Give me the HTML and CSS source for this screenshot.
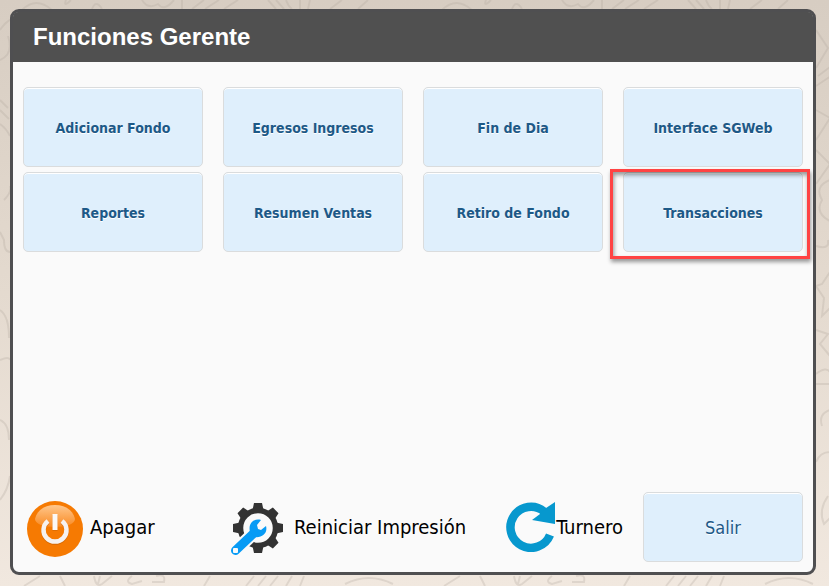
FILE: index.html
```html
<!DOCTYPE html>
<html lang="es">
<head>
<meta charset="utf-8">
<meta name="viewport" content="width=device-width, initial-scale=1">
<title>Funciones Gerente</title>
<link rel="stylesheet" href="styles.css">
</head>
<body>
<svg class="doodles" aria-hidden="true">
  <defs>
    <pattern id="doodle" width="420" height="600" patternUnits="userSpaceOnUse">
      <path d="M22 10q14-14 30 0M66 0q-3 8 5 0M92 9q4-10 10 0M142 0q6 10 16 4q6 8 16-4M182 0v9M192 9l12-9M205 9l14-9M224 9l14-9M268 0l8 9M276 0l8 9M286 0q2 6 6 9M300 0v9M310 0l-2 9M330 9l12-9M358 9l10-9"/>
      <path d="M0 30q12-18 26-8M0 60q14-6 8-24M0 100l8 8M0 110l9 9M0 124q6 4 10 12M4 200q8-8 6-14M0 232l4 8q0 12 6 12M0 310q9 6 9 28M0 360q9-4 10 0M0 420q9 4 9 20M0 500q8-10 10-24"/>
      <path d="M396 30l12 18-12 20M398 76l16-12M396 86l18-12M396 110l14 8-14 22M396 150l14 14-14 20M410 180q-16 6-8 20q-8 14 10 22M396 246q14 4 12-6M410 272l-8 12-6 2 8 12-2 18 8-8M396 330l12 4-8 10 10 12M396 374q10-8 14-2M396 384h14M410 410q-12 4-8 16M396 462q4-10 14-10M408 496q-10 14-4 28l8-8"/>
      <path d="M24 586l16-10M60 576l5 10M94 576q2 12 8 8l10-8M100 576l-2 8M132 576q-8 6 0 8l10-3M156 576q10-3 8 6h-12M210 576l-6 10M246 586l8-10M258 586l8-10M270 586l8-10M286 586l6-10M300 586l4-10M345 584q24-12 48 0"/>
    </pattern>
  </defs>
  <rect width="100%" height="100%" fill="url(#doodle)" stroke="none"/>
</svg>
<main class="panel">
  <header class="panel-header"><h1>Funciones Gerente</h1></header>
  <div class="grid">
    <button class="tile" type="button">Adicionar Fondo</button>
    <button class="tile" type="button">Egresos Ingresos</button>
    <button class="tile" type="button">Fin de Dia</button>
    <button class="tile" type="button">Interface SGWeb</button>
    <button class="tile" type="button">Reportes</button>
    <button class="tile" type="button">Resumen Ventas</button>
    <button class="tile" type="button">Retiro de Fondo</button>
    <div class="marked"><button class="tile" type="button">Transacciones</button></div>
  </div>
  <footer class="actions">
    <button class="action" type="button">
      <svg class="icon-power" viewBox="0 0 56 56" aria-hidden="true">
        <defs>
          <linearGradient id="gloss" x1="0" y1="0" x2="0" y2="1"><stop offset="0" stop-color="#ffc78c"/><stop offset="1" stop-color="#f98a22"/></linearGradient>
        </defs>
        <circle cx="28" cy="28" r="28" fill="#f67a02"/>
        <path d="M8 18C10 9 18 4 28 4s18 5 20 14c0 5-9 8-20 8S8 23 8 18z" fill="url(#gloss)"/>
        <path d="M21 21A11.500 11.500 0 1 0 35 21" fill="none" stroke="#b85a06" stroke-opacity=".5" stroke-width="4.500"/>
        <path d="M21 20A11.500 11.500 0 1 0 35 20" fill="none" stroke="#f6f2f0" stroke-width="4.500"/>
        <rect x="25.500" y="14" width="5" height="16" fill="#b85a06" fill-opacity=".4"/>
        <rect x="25.500" y="13" width="5" height="16" fill="#fbf8f6"/>
      </svg>
      <span>Apagar</span>
    </button>
    <button class="action action-print" type="button">
      <svg class="icon-gear" viewBox="0 0 54 54" aria-hidden="true">
        <g transform="translate(28 26)" fill="#333">
          <circle r="17.500" fill="none" stroke="#333" stroke-width="5.500"/>
          <g id="teeth"><path d="M-5.500-18l1.500-7h8l1.500 7zM-5.500 18l1.500 7h8l1.500-7z"/><path d="M-18-5.500l-7 1.500v8l7 1.500zM18-5.500l7 1.500v8l-7 1.500z"/></g>
          <use href="#teeth" transform="rotate(45)"/>
        </g>
        <path d="M25 30L6 48" stroke="#fafafa" stroke-width="13" stroke-linecap="round"/>
        <path d="M24 31L5.500 48.500" stroke="#079bf5" stroke-width="9" stroke-linecap="round"/>
        <path d="M31 18C23 16 18 22 20 30L25 35C32 36 38 31 36 24L31 28L28 27L27 23z" fill="#079bf5"/>
        <rect x="3" y="46" width="5" height="5" rx="1" fill="#fafafa"/>
      </svg>
      <span>Reiniciar Impresión</span>
    </button>
    <button class="action action-turn" type="button">
      <svg class="icon-reload" viewBox="0 0 50 50" aria-hidden="true">
        <path d="M44 33A20.500 20.500 0 1 1 38 9.500" fill="none" stroke="#0798ce" stroke-width="8.500"/>
        <path d="M49 0v22l-23-4 8-6 6-6z" fill="#0798ce"/>
      </svg>
      <span>Turnero</span>
    </button>
    <button class="tile exit" type="button">Salir</button>
  </footer>
</main>
</body>
</html>
```
FILE: styles.css
```css
* { box-sizing: border-box; }

body {
  min-height: 100vh;
  margin: 0;
  padding: 9px 13px 11px 10px;
  display: flex;
  background: linear-gradient(#d7cdc2, #e4dacf 50%, #f1e8df);
  font-family: Tahoma, "DejaVu Sans Condensed", "Noto Sans", sans-serif;
}

.doodles {
  position: absolute;
  inset: 0;
  width: 100%;
  height: 100%;
  z-index: -1;
  fill: none;
  stroke: #b5aba0;
  stroke-opacity: 0.3;
  stroke-width: 2;
}

.panel {
  flex: 1;
  display: flex;
  flex-direction: column;
  border: 3px solid #4f4f51;
  border-radius: 9px;
  background: #fafafa;
}

.panel-header {
  padding: 10px 20px 11px;
  background: #505050;
  border-radius: 5px 5px 0 0;
}

h1 {
  margin: 0;
  color: #fff;
  font: bold 24px/29px "Liberation Sans", Arial, sans-serif;
}

.grid {
  display: grid;
  grid-template-columns: repeat(4, 1fr);
  gap: 5px 20px;
  padding: 25px 10px;
}

button {
  margin: 0;
  font-family: inherit;
  cursor: pointer;
}

.tile {
  width: 100%;
  height: 80px;
  padding: 1px 0 0;
  border: 1px solid #dadcdd;
  border-radius: 5px;
  background: #dfeffc;
  box-shadow: inset 0 1px #fff;
  color: #1d5987;
  font-size: 14px;
  font-weight: bold;
  text-shadow: 0 1px #fff;
}

.marked { position: relative; }

.marked::after {
  content: "";
  position: absolute;
  inset: -3px -7px -7px -13px;
  border: 3px solid #ff4343;
  box-shadow: 1px 3px 4px rgba(0, 0, 0, 0.4), inset 1px 3px 4px rgba(0, 0, 0, 0.4);
  pointer-events: none;
}

.actions {
  display: flex;
  align-items: center;
  margin-top: auto;
  padding: 0 10px 10px 14px;
}

.action {
  display: flex;
  align-items: center;
  padding: 0;
  border: 0;
  background: none;
  color: #000;
  font-size: 20px;
  white-space: nowrap;
}

.action svg { flex: none; }

.icon-power { width: 56px; height: 56px; margin: 4px 7px 0 0; }
.icon-gear { width: 54px; height: 54px; margin: 4px 10px 0 0; }
.icon-reload { width: 50px; height: 50px; }

.action-print { margin-left: auto; }
.action-turn { margin-left: 40px; }

.exit {
  width: 160px;
  height: 70px;
  margin-left: 20px;
  font-size: 18px;
  font-weight: normal;
}
```
